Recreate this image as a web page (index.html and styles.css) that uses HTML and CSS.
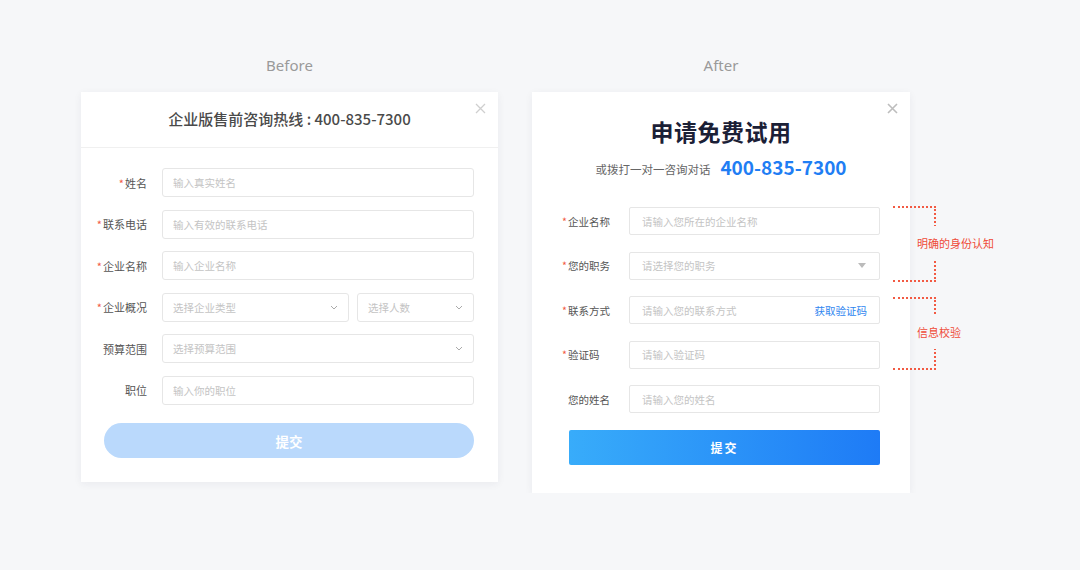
FILE: index.html
```html
<!DOCTYPE html>
<html lang="zh-CN">
<head>
    <meta charset="UTF-8">
    <meta name="viewport" content="width=device-width, initial-scale=1.0">
    <title>表单优化 Before / After</title>
    <link rel="stylesheet" href="styles.css">
</head>
<body>
    <div class="compare">
        <!-- Before -->
        <div class="panel panel-before">
            <div class="caption">Before</div>
            <div class="card card-old">
                <div class="old-header">
                    <h2>企业版售前咨询热线 : 400-835-7300</h2>
                    <span class="close">
                        <svg width="11" height="11" viewBox="0 0 11 11"><path d="M1 1L10 10M10 1L1 10" stroke="#cfcfcf" stroke-width="1.3"/></svg>
                    </span>
                </div>
                <form class="old-form">
                    <div class="row">
                        <label><i>*</i>姓名</label>
                        <input type="text" placeholder="输入真实姓名">
                    </div>
                    <div class="row">
                        <label><i>*</i>联系电话</label>
                        <input type="text" placeholder="输入有效的联系电话">
                    </div>
                    <div class="row">
                        <label><i>*</i>企业名称</label>
                        <input type="text" placeholder="输入企业名称">
                    </div>
                    <div class="row">
                        <label><i>*</i>企业概况</label>
                        <div class="select select-wide">
                            <span>选择企业类型</span>
                            <svg width="8" height="5" viewBox="0 0 8 5"><path d="M1 1L4 4L7 1" fill="none" stroke="#aaa" stroke-width="1"/></svg>
                        </div>
                        <div class="select select-small">
                            <span>选择人数</span>
                            <svg width="8" height="5" viewBox="0 0 8 5"><path d="M1 1L4 4L7 1" fill="none" stroke="#aaa" stroke-width="1"/></svg>
                        </div>
                    </div>
                    <div class="row">
                        <label>预算范围</label>
                        <div class="select">
                            <span>选择预算范围</span>
                            <svg width="8" height="5" viewBox="0 0 8 5"><path d="M1 1L4 4L7 1" fill="none" stroke="#aaa" stroke-width="1"/></svg>
                        </div>
                    </div>
                    <div class="row">
                        <label>职位</label>
                        <input type="text" placeholder="输入你的职位">
                    </div>
                    <button type="button" class="btn-old">提交</button>
                </form>
            </div>
        </div>

        <!-- After -->
        <div class="panel panel-after">
            <div class="caption">After</div>
            <div class="card card-new">
                <span class="close">
                    <svg width="11" height="11" viewBox="0 0 11 11"><path d="M1 1L10 10M10 1L1 10" stroke="#bdbdbd" stroke-width="1.6"/></svg>
                </span>
                <h1>申请免费试用</h1>
                <p class="hotline">或拨打一对一咨询对话<strong>400-835-7300</strong></p>
                <form class="new-form">
                    <div class="row">
                        <label><i>*</i>企业名称</label>
                        <input type="text" placeholder="请输入您所在的企业名称">
                    </div>
                    <div class="row">
                        <label><i>*</i>您的职务</label>
                        <div class="select">
                            <span>请选择您的职务</span>
                            <svg width="8" height="5" viewBox="0 0 8 5"><path d="M0 0H8L4 5Z" fill="#bbb"/></svg>
                        </div>
                    </div>
                    <div class="row">
                        <label><i>*</i>联系方式</label>
                        <div class="input-wrap">
                            <input type="text" placeholder="请输入您的联系方式">
                            <a href="#" class="get-code">获取验证码</a>
                        </div>
                    </div>
                    <div class="row">
                        <label><i>*</i>验证码</label>
                        <input type="text" placeholder="请输入验证码">
                    </div>
                    <div class="row">
                        <label>您的姓名</label>
                        <input type="text" placeholder="请输入您的姓名">
                    </div>
                    <button type="button" class="btn-new">提交</button>
                </form>

                <!-- annotations -->
                <div class="bracket bracket-identity"><span>明确的身份认知</span></div>
                <div class="bracket bracket-verify"><span>信息校验</span></div>
            </div>
        </div>
    </div>
</body>
</html>
```

FILE: styles.css
```css
body {
    margin: 0;
    background-color: #f6f7f9;
    font-family: "Noto Sans CJK SC", "Noto Sans", sans-serif;
    color: #555;
}
.compare {
    display: flex;
    align-items: flex-start;
    gap: 34px;
    padding: 52px 0 0 81px;
}
.caption {
    font-family: "Noto Sans", "Open Sans", sans-serif;
    font-size: 15px;
    line-height: 26px;
    color: #9a9a9a;
    text-align: center;
    margin-bottom: 14px;
}
.card {
    position: relative;
    background-color: #fff;
    box-shadow: 0 2px 8px rgba(30, 40, 60, 0.06);
}
.close {
    position: absolute;
    top: 11px;
    right: 11px;
    width: 11px;
    height: 11px;
    line-height: 0;
}
input {
    box-sizing: border-box;
    border: 1px solid #e6e6e6;
    border-radius: 2px;
    padding: 0 10px;
    font-family: inherit;
    font-size: 10.5px;
    outline: none;
}
input::placeholder {
    color: #c4c4c4;
}
label i {
    font-style: normal;
    color: #f25a43;
    margin-right: 1px;
}

/* before */
.card-old {
    width: 417px;
    height: 390px;
}
.old-header {
    height: 56px;
    border-bottom: 1px solid #f0f0f0;
    box-sizing: border-box;
    display: flex;
    align-items: center;
    justify-content: center;
}
.old-header h2 {
    margin: 0 0 2px;
    font-size: 15px;
    font-weight: 500;
    color: #4a4a4a;
}
.card-old .close {
    top: 11px;
    right: 12px;
}
.old-form {
    padding: 20px 24px 0 0;
    display: flex;
    flex-direction: column;
    gap: 12.6px;
}
.old-form .row {
    display: flex;
    align-items: center;
    height: 29px;
}
.old-form label {
    width: 66px;
    margin-right: 15px;
    text-align: right;
    font-size: 11px;
    color: #555;
}
.old-form input {
    width: 312px;
    height: 29px;
    border-radius: 3px;
}
.select {
    box-sizing: border-box;
    height: 29px;
    width: 312px;
    border: 1px solid #e6e6e6;
    border-radius: 3px;
    padding: 0 10px;
    display: flex;
    align-items: center;
    justify-content: space-between;
    font-size: 10.5px;
    color: #c4c4c4;
}
.select-wide {
    width: 187px;
}
.select-small {
    width: 117px;
    margin-left: 8px;
}
.btn-old {
    margin: 5.5px 0 0 23px;
    width: 370px;
    height: 35px;
    border: none;
    border-radius: 18px;
    background-color: #bad9fc;
    color: #fff;
    font-family: inherit;
    font-size: 13.5px;
    font-weight: 700;
}

/* after */
.card-new {
    width: 378px;
    height: 401px;
    padding-top: 22px;
    box-sizing: border-box;
}
.card-new .close {
    top: 11px;
    right: 12px;
}
.card-new h1 {
    margin: 0;
    text-align: center;
    font-size: 23px;
    line-height: 34px;
    font-weight: 700;
    color: #1b2036;
    letter-spacing: 0.5px;
}
.hotline {
    margin: 6px 0 0;
    text-align: center;
    font-size: 11.5px;
    line-height: 26px;
    color: #666;
}
.hotline strong {
    margin-left: 10px;
    font-size: 19px;
    font-weight: 700;
    color: #1f7ef4;
    vertical-align: -1px;
}
.new-form {
    padding: 25px 30px 0 0;
    display: flex;
    flex-direction: column;
    gap: 16.5px;
}
.new-form .row {
    display: flex;
    align-items: center;
    height: 28px;
}
.new-form label {
    box-sizing: border-box;
    width: 78px;
    padding-left: 36px;
    margin-right: 19px;
    text-align: left;
    white-space: nowrap;
    font-size: 10.5px;
    color: #555;
}
.new-form label i {
    display: inline-block;
    width: 6px;
    margin: 0 0 0 -6px;
}
.new-form input,
.new-form .select,
.input-wrap {
    width: 251px;
    height: 28px;
    border-radius: 2px;
    padding: 0 12px;
}
.new-form .select {
    padding-right: 13px;
}
.input-wrap {
    box-sizing: border-box;
    border: 1px solid #e6e6e6;
    display: flex;
    align-items: center;
}
.input-wrap input {
    border: none;
    padding: 0;
    flex: 1;
    height: 26px;
    width: auto;
}
.get-code {
    font-size: 10.5px;
    color: #2f86f0;
    text-decoration: none;
}
.btn-new {
    margin: 0 0 0 37px;
    width: 311px;
    height: 35px;
    border: none;
    border-radius: 2px;
    background: linear-gradient(90deg, #38acfa, #1e7bf6);
    color: #fff;
    font-family: inherit;
    font-size: 12px;
    font-weight: 700;
    letter-spacing: 2px;
}

/* annotations */
.bracket {
    position: absolute;
    left: 361px;
    width: 41px;
    border: 2px dotted #f25a43;
    border-left: none;
    display: flex;
    align-items: center;
}
.bracket span {
    margin: 0 0 3px 24px;
    padding: 9px 0;
    background-color: #f6f7f9;
    white-space: nowrap;
    font-size: 11px;
    color: #ef4b38;
}
.bracket-identity {
    top: 114px;
    height: 72px;
}
.bracket-verify {
    top: 205px;
    height: 69px;
}
```
